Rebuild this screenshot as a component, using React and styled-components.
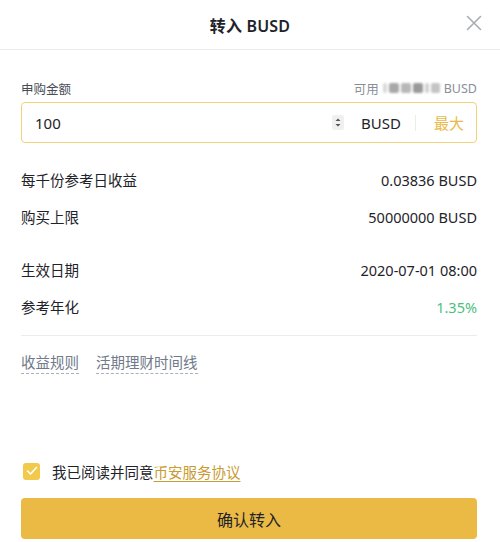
import React, { useState } from 'react'
import styled, { createGlobalStyle } from 'styled-components'

const GlobalStyle = createGlobalStyle`
    html, body {
        margin: 0;
        padding: 0;
        background: #ffffff;
    }
    body {
        font-family: "Noto Sans", "Noto Sans CJK SC", sans-serif;
        color: #1e2329;
    }
    * {
        box-sizing: border-box;
    }
`
const Modal = styled.div`
    width: 500px;
    height: 542px;
    background: #ffffff;
    display: flex;
    flex-direction: column;
    overflow: hidden;
`
const Header = styled.div`
    height: 50px;
    border-bottom: 1px solid #ececec;
    display: flex;
    align-items: center;
    justify-content: center;
    position: relative;
`
const Title = styled.h2`
    margin: 0;
    font-size: 16px;
    font-weight: 600;
    color: #1e2329;
    letter-spacing: 0.2px;
`
const CloseButton = styled.button`
    position: absolute;
    right: 16px;
    top: 13px;
    width: 20px;
    height: 20px;
    padding: 0;
    border: none;
    background: transparent;
    cursor: pointer;
    display: flex;
    align-items: center;
    justify-content: center;
`
const Body = styled.div`
    padding: 0 23px 0 21px;
    display: flex;
    flex-direction: column;
    flex: 1;
`
const LabelRow = styled.div`
    margin-top: 28px;
    height: 20px;
    display: flex;
    align-items: center;
    justify-content: space-between;
    font-size: 12.5px;
`
const Label = styled.span`
    color: #474d57;
`
const Available = styled.span`
    color: #8a8f96;
    display: flex;
    align-items: center;
    gap: 4px;
`
const Masked = styled.span`
    display: inline-flex;
    align-items: center;
    gap: 2px;
    filter: blur(0.8px);
`
const MaskBlock = styled.span`
    display: inline-block;
    width: ${({ w }) => w}px;
    height: 10px;
    border-radius: 2px;
    background: ${({ shade }) => shade};
`
const InputBox = styled.div`
    margin-top: 4px;
    height: 41px;
    border: 1px solid #f2d27a;
    border-radius: 4px;
    display: flex;
    align-items: center;
    padding: 0 12px 0 13px;
`
const AmountInput = styled.input`
    flex: 1;
    border: none;
    outline: none;
    font-family: inherit;
    font-size: 15px;
    color: #1e2329;
    padding: 0;
    background: transparent;
`
const Spinner = styled.span`
    width: 12px;
    height: 15px;
    border-radius: 2px;
    background: #f0f0f0;
    display: flex;
    align-items: center;
    justify-content: center;
    margin-right: 17px;
`
const Unit = styled.span`
    font-size: 15px;
    color: #1e2329;
`
const Divider = styled.span`
    width: 1px;
    height: 16px;
    background: #ececec;
    margin: 0 18px 0 14px;
`
const MaxButton = styled.button`
    border: none;
    background: transparent;
    padding: 0;
    font-family: inherit;
    font-size: 15px;
    color: #e9b949;
    cursor: pointer;
`
const InfoList = styled.div`
    margin-top: 18px;
    display: flex;
    flex-direction: column;
`
const InfoRow = styled.div`
    height: 37px;
    margin-top: ${({ gapTop }) => gapTop || 0}px;
    display: flex;
    align-items: center;
    justify-content: space-between;
    font-size: 14.5px;
`
const InfoLabel = styled.span`
    color: #1e2329;
`
const InfoValue = styled.span`
    color: ${({ positive }) => (positive ? '#4cbf80' : '#1e2329')};
`
const Separator = styled.div`
    margin-top: 10px;
    height: 1px;
    background: #ececec;
`
const LinkRow = styled.div`
    margin-top: 16px;
    height: 22px;
    display: flex;
    gap: 17px;
`
const HelpLink = styled.a`
    font-size: 14.5px;
    color: #707a8a;
    text-decoration: none;
    border-bottom: 1px dashed #aab0b8;
    line-height: 21px;
    cursor: pointer;
`
const Spacer = styled.div`
    flex: 1;
`
const AgreeRow = styled.label`
    display: flex;
    align-items: center;
    gap: 12px;
    height: 22px;
    padding-left: 2px;
    font-size: 14.5px;
    color: #1e2329;
    cursor: pointer;
`
const CheckBox = styled.span`
    width: 17px;
    height: 17px;
    border-radius: 3px;
    background: ${({ checked }) => (checked ? '#f2c94c' : '#ffffff')};
    border: ${({ checked }) => (checked ? 'none' : '1px solid #ccc')};
    display: flex;
    align-items: center;
    justify-content: center;
`
const AgreementLink = styled.a`
    color: #c99b32;
    text-decoration: underline;
    text-underline-offset: 3px;
`
const SubmitButton = styled.button`
    margin: 16px 0 3px;
    height: 41px;
    width: 100%;
    border: none;
    border-radius: 4px;
    background: #ebba45;
    font-family: inherit;
    font-size: 16px;
    color: #1e2329;
    cursor: pointer;
`

const infoRows = [
    { label: '每千份参考日收益', value: '0.03836 BUSD' },
    { label: '购买上限', value: '50000000 BUSD' },
    { label: '生效日期', value: '2020-07-01 08:00', gapTop: 16 },
    { label: '参考年化', value: '1.35%', positive: true },
]

export default function App() {
    const [amount, setAmount] = useState('100')
    const [agreed, setAgreed] = useState(true)
    return (
        <Modal>
            <GlobalStyle />
            <Header>
                <Title>转入 BUSD</Title>
                <CloseButton aria-label="close">
                    <svg width="16" height="16" viewBox="0 0 16 16">
                        <path d="M1.5 1.5 L14.5 14.5 M14.5 1.5 L1.5 14.5" stroke="#a9adb3" strokeWidth="1.6" strokeLinecap="round" />
                    </svg>
                </CloseButton>
            </Header>
            <Body>
                <LabelRow>
                    <Label>申购金额</Label>
                    <Available>
                        可用
                        <Masked>
                            <MaskBlock w={4} shade="#d8d8d8" />
                            <MaskBlock w={10} shade="#a8a8a8" />
                            <MaskBlock w={10} shade="#b8b8b8" />
                            <MaskBlock w={10} shade="#9a9a9a" />
                            <MaskBlock w={4} shade="#d0d0d0" />
                            <MaskBlock w={9} shade="#c4c4c4" />
                        </Masked>
                        BUSD
                    </Available>
                </LabelRow>
                <InputBox>
                    <AmountInput value={amount} onChange={(e) => setAmount(e.target.value)} />
                    <Spinner>
                        <svg width="8" height="11" viewBox="0 0 8 11">
                            <path d="M1.5 4 L4 1.5 L6.5 4 Z M1.5 7 L4 9.5 L6.5 7 Z" fill="#555" />
                        </svg>
                    </Spinner>
                    <Unit>BUSD</Unit>
                    <Divider />
                    <MaxButton>最大</MaxButton>
                </InputBox>
                <InfoList>
                    {infoRows.map((row) => (
                        <InfoRow key={row.label} gapTop={row.gapTop}>
                            <InfoLabel>{row.label}</InfoLabel>
                            <InfoValue positive={row.positive}>{row.value}</InfoValue>
                        </InfoRow>
                    ))}
                </InfoList>
                <Separator />
                <LinkRow>
                    <HelpLink>收益规则</HelpLink>
                    <HelpLink>活期理财时间线</HelpLink>
                </LinkRow>
                <Spacer />
                <AgreeRow onClick={() => setAgreed(!agreed)}>
                    <CheckBox checked={agreed}>
                        {agreed && (
                            <svg width="12" height="10" viewBox="0 0 12 10">
                                <path d="M1.5 5 L4.5 8 L10.5 1.5" stroke="#fff" strokeWidth="1.6" fill="none" strokeLinecap="round" strokeLinejoin="round" />
                            </svg>
                        )}
                    </CheckBox>
                    <span>
                        我已阅读并同意<AgreementLink>币安服务协议</AgreementLink>
                    </span>
                </AgreeRow>
                <SubmitButton>确认转入</SubmitButton>
            </Body>
        </Modal>
    )
}
